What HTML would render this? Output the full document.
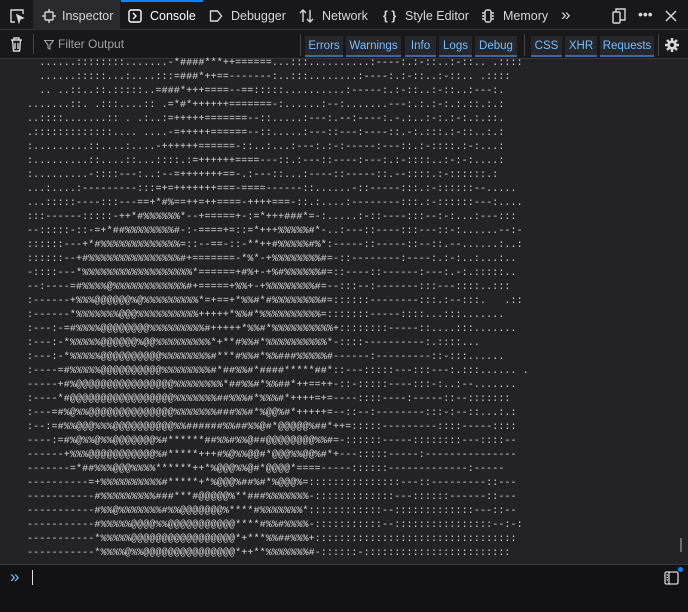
<!DOCTYPE html>
<html><head><meta charset="utf-8">
<style>
*{margin:0;padding:0;box-sizing:border-box}
body{width:688px;height:612px;background:#232327;overflow:hidden;font-family:"Liberation Sans",sans-serif;position:relative;color:#d7d7db}
.bar1{position:absolute;left:0;top:0;width:688px;height:30px;background:#18181a;border-bottom:1px solid #38383d}
.bar2{position:absolute;left:0;top:30px;width:688px;height:29px;background:#18181a;border-bottom:1px solid #38383d}
.tab{position:absolute;top:0;height:30px;font-size:12.5px;line-height:32px;color:#d7d7db}
.fb{position:absolute;top:36px;height:21px;font-size:11.5px;line-height:20px;color:#75bfff;text-align:center;background:#26262b;border-bottom:2px solid #3c6aa0}
.sep{position:absolute;top:34px;width:1px;height:22px;background:#44444a}
pre{position:absolute;left:27px;top:57px;font-family:"Liberation Mono",monospace;font-size:10px;line-height:14px;color:#dadade;letter-spacing:0.12px}
.inp{position:absolute;left:0;top:564px;width:688px;height:48px;background:#121214;border-top:1px solid #38383d}
</style></head><body>
<div class="bar1">
  <svg style="position:absolute;left:9px;top:8px" width="16" height="16" viewBox="0 0 16 16" fill="none" stroke="#d7d7db" stroke-width="1.4"><path d="M6 14H2V2h12v4"/><path d="M8 7l6 3-3 1-1 3z" fill="#d7d7db"/></svg>
  <div class="tab" style="left:33px;width:87px;background:#2a2a2e"></div>
  <svg style="position:absolute;left:42px;top:9px" width="14" height="14" viewBox="0 0 14 14" fill="none" stroke="#d7d7db" stroke-width="1.4"><rect x="3" y="3" width="8" height="8" rx="1"/><path d="M7 0v3M7 11v3M0 7h3M11 7h3"/></svg>
  <div class="tab" style="left:62px">Inspector</div>
  <div style="position:absolute;left:121px;top:0;width:82px;height:2px;background:#0a84ff"></div>
  <svg style="position:absolute;left:128px;top:9px" width="14" height="14" viewBox="0 0 14 14" fill="none" stroke="#fff" stroke-width="1.4"><rect x="1" y="1" width="12" height="12" rx="2"/><path d="M5 4l3 3-3 3"/></svg>
  <div class="tab" style="left:150px;color:#fff">Console</div>
  <svg style="position:absolute;left:209px;top:9px" width="14" height="14" viewBox="0 0 14 14" fill="none" stroke="#d7d7db" stroke-width="1.4"><path d="M1.5 2h7l4 5-4 5h-7z"/></svg>
  <div class="tab" style="left:231px">Debugger</div>
  <svg style="position:absolute;left:299px;top:8px" width="16" height="16" viewBox="0 0 16 16" fill="none" stroke="#d7d7db" stroke-width="1.4"><path d="M4 14V2M1 5l3-3 3 3M11 2v12M8 11l3 3 3-3"/></svg>
  <div class="tab" style="left:322px">Network</div>
  <div class="tab" style="left:383px;font-weight:bold">{ }</div>
  <div class="tab" style="left:405px">Style Editor</div>
  <svg style="position:absolute;left:481px;top:9px" width="14" height="14" viewBox="0 0 14 14" fill="none" stroke="#d7d7db" stroke-width="1.4"><rect x="4" y="1" width="6" height="12" rx="2"/><path d="M1 4h3M1 7h3M1 10h3M10 4h3M10 7h3M10 10h3"/></svg>
  <div class="tab" style="left:503px">Memory</div>
  <div class="tab" style="left:561px;font-size:17px;line-height:30px">»</div>
  <svg style="position:absolute;left:612px;top:8px" width="14" height="16" viewBox="0 0 14 16" fill="none" stroke="#d7d7db" stroke-width="1.4"><rect x="1" y="4" width="7" height="11" rx="1"/><path d="M4 4V1h9v11H8"/></svg>
  <div class="tab" style="left:638px;font-size:14px;line-height:28px">•••</div>
  <svg style="position:absolute;left:665px;top:10px" width="12" height="12" viewBox="0 0 12 12" stroke="#d7d7db" stroke-width="1.5"><path d="M1 1l10 10M11 1L1 11"/></svg>
</div>
<div class="bar2">
  <svg style="position:absolute;left:10px;top:7px" width="13" height="15" viewBox="0 0 13 15" fill="none" stroke="#d7d7db" stroke-width="1.4"><path d="M1 3h11M4 3V1h5v2M2.5 3l1 11h6l1-11M5 6v6M8 6v6"/></svg>
  <div style="position:absolute;left:33px;top:4px;width:1px;height:20px;background:#44444a"></div>
  <svg style="position:absolute;left:44px;top:10px" width="10" height="10" viewBox="0 0 10 10" fill="none" stroke="#a0a0a6" stroke-width="1.1"><path d="M0.5 0.5h9L6 5v4L4 8V5z"/></svg>
  <div style="position:absolute;left:58px;top:7px;font-size:12px;color:#a0a0a6">Filter Output</div>
</div>
<div class="sep" style="left:300px"></div>
<div class="fb" style="left:305px;width:38px">Errors</div>
<div class="fb" style="left:346px;width:55px">Warnings</div>
<div class="fb" style="left:405px;width:31px">Info</div>
<div class="fb" style="left:439px;width:33px">Logs</div>
<div class="fb" style="left:475px;width:42px">Debug</div>
<div class="sep" style="left:524px"></div>
<div class="fb" style="left:531px;width:31px">CSS</div>
<div class="fb" style="left:565px;width:32px">XHR</div>
<div class="fb" style="left:600px;width:54px">Requests</div>
<div class="sep" style="left:658px"></div>
<svg style="position:absolute;left:664px;top:37px" width="16" height="16" viewBox="0 0 16 16"><g stroke="#d7d7db" stroke-width="2.4"><path d="M8 1v14M1 8h14M3 3l10 10M13 3L3 13"/></g><circle cx="8" cy="8" r="4.6" fill="#d7d7db"/><circle cx="8" cy="8" r="2" fill="#18181a"/></svg>
<pre>  ......::::::::.......-*####***++======...:::..........:----:.:-::..:-::.. .::::
  ......:::::...:....:::=###*++==-------:..:::........:----:.:-::..:-::.. .::::
  .. ..::..::.:::::..=###*+++====--==:::::..........:-----:.:-::..:-::..:---:.
.......::. .:::....:: .=*#*++++++=======-:......:--:.......---:.:.:-:.:.::.:.:
..::::.......:: . .:..:=+++++=======--::.....:---:.--:----:.-.:..:-:.:-:.:.::.
.:::::::::::::.... ....-=+++++======--::.....:---::---:----::.-:.:::.:-::..:.:
:.........::....:....-++++++======-::..:...:---:.:-:-----:---::.:-::::.:-:...:
:.........::....::...::::.:=++++++====---::.:---::----:---:.:-::::..:-:-:....:
:.........-::::---:..:--=+++++++==-.:---::...:----::-----::.--::::.:-::::::.:
...:....:---------:::=+=+++++++===-====------::......-::-----:::.:-::::::--.....
...:::::----:::---==+*#%==++=++====-++++===-::.:....:--------:::.:-::::::---:....
:::------:::::-++*#%%%%%%*--+=====+-:=*+++###*=-:.....:-::----:::--:-:...:---:::
--:::::-::-=+*##%%%%%%%%#-:-====+=::=*+++%%%%%#*-..:---::----:::---::-:......--:-
::::::---+*#%%%%%%%%%%%%%=::--==-::-**++#%%%%%#%*:-----::-----::--::.--......:..:
::::::--+#%%%%%%%%%%%%%%%#+=======-*%*-+%%%%%%%%#=-::--------:----:.:-:..:...:..
-::::---*%%%%%%%%%%%%%%%%%%*======+#%+-+%#%%%%%%#=::----::------:---:.-:.:::::..
--:----=#%%%%@%%%%%%%%%%%%#+=====+%%+-+%%%%%%%%#=--:::--:-------:::---::::..:::
:------+%%%@@@@@@%@%%%%%%%%%*=+==+*%%#*#%%%%%%%%#=::::::--------:::.:--:::.   .::
:------*%%%%%%%@@@%%%%%%%%%%+++++*%%#*%%%%%%%%%%=:::::::-----::::...:::.......
:---:-=#%%%%@@@@@@@@%%%%%%%%%#+++++*%%#*%%%%%%%%%%+::::::::-----::....:::.......
:---:-*%%%%%@@@@@@%@@%%%%%%%%%*+**#%%#*%%%%%%%%%%*-::::----------:.::::...
:---:-*%%%%%@@@@@@@@@@%%%%%%%%#***#%%#*%%###%%%%%#------:---------::-:::......
:----=#%%%%%@@@@@@@@@@%%%%%%%%#*##%%#*####*****##*::---:::::---:::---:.:::...... .
-----+#%@@@@@@@@@@@@@@@@%%%%%%%%*##%%#*%%##*++==++-::-:::::----:::-:..:--.......
:----*#@@@@@@@@@@@@@@@@@%%%%%%%##%%%#*%%%#*++++=+=----::::----:-----::--:::::::
:---=#%@%%@@@@@@@@@@@@@@%%%%%%%###%%#*%@@%#*+++++=--::--:--------:::-:--::...:.:
:--:=#%%@@@%%%@@@@@@@@@@%%######%%##%%@#*@@@@@%##*++=:::::---------::::-----::::
----:=#%@%%@%%@@@@@@@%#******##%%#%%@##@@@@@@@@%%#=-::::::-----::::::::---::::--
------+%%%@@@@@@@@@@@%#*****+++#%@%%@@#*@@@%%@@%#*+---:::::-----:---------------
-------=*##%%%@@@%%%%******++*%@@@%%@#*@@@@*====-----::::::-------------:-----
----------=+%%%%%%%%%%#*****+*%@@@%##%#*%@@@%=:::::::::::::::---::---------::---
-----------#%%%%%%%%%###***#@@@@@%**###%%%%%%%-:::::::::::::---::::::------::---
-----------#%%@%%%%%%%#%%@@@@@@@%****#%%%%%%%*::::::::::::--:::::::::::::---::--
-----------#%%%%%@@@@%%@@@@@@@@@@@****#%%#%%%%-:::::::::::--::::::::::::::::--:-:
-----------*%%%%%@@@@@@@@@@@@@@@@@*+***%%##%%%+:::::::::::::::::::::::::::::::::
-----------*%%%%@%%@@@@@@@@@@@@@@@*++**%%%%%%%#-::::::-::::::::::::::::::::::::</pre>
<div style="position:absolute;left:680px;top:538px;width:2px;height:14px;background:#6a6a6e"></div>
<div class="inp">
  <div style="position:absolute;left:10px;top:2px;font-size:17px;color:#75bfff">»</div>
  <div style="position:absolute;left:32px;top:5px;width:1px;height:15px;background:#e0e0e0"></div>
  <svg style="position:absolute;left:664px;top:5px" width="15" height="15" viewBox="0 0 15 15" fill="none" stroke="#d7d7db" stroke-width="1.3"><rect x="1" y="2" width="13" height="12" rx="1.5"/><path d="M5 2v12M2.5 5h1.5M2.5 7.5h1.5M2.5 10h1.5"/></svg>
  <div style="position:absolute;left:678px;top:2px;width:5px;height:5px;border-radius:50%;background:#0a84ff"></div>
</div>
</body></html>
